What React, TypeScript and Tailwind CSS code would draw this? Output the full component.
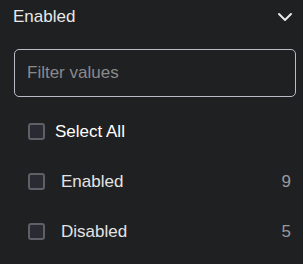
import React from "react";

function Box() {
  return (
    <span className="block w-[17px] h-[17px] rounded-[3px] border-2 border-[#5f5f68] bg-[#2a2a33] shrink-0" />
  );
}

export default function App() {
  const items = [
    { label: "Enabled", count: 9 },
    { label: "Disabled", count: 5 },
  ];
  return (
    <div
      className="w-[303px] h-[264px] bg-[#1f2022] text-white overflow-hidden"
      style={{ fontFamily: '"Liberation Sans", Arial, sans-serif' }}
    >
      <div className="flex items-center justify-between pl-[13px] pr-[10px] h-[33px]">
        <span className="text-[17px] leading-[20px] text-[#e8e8e8]">Enabled</span>
        <svg width="16" height="10" viewBox="0 0 16 10">
          <polyline points="2,2 8,8 14,2" fill="none" stroke="#e8e8e8" strokeWidth="2" strokeLinecap="round" strokeLinejoin="round" />
        </svg>
      </div>
      <div className="pl-[14px] pr-[7px] mt-[16px]">
        <div className="h-[48px] rounded-[5px] border border-[#b7bcc8] flex items-center pl-[12px]">
          <span className="text-[17px] text-[#8a8a8e]">Filter values</span>
        </div>
      </div>
      <div className="pl-[28px] pr-[12px] mt-[26px] flex flex-col gap-[33px]">
        <div className="flex items-center h-[17px]">
          <Box />
          <span className="ml-[10px] text-[17px] text-white">Select All</span>
        </div>
        {items.map((it) => (
          <div key={it.label} className="flex items-center h-[17px]">
            <Box />
            <span className="ml-[16px] text-[17px] text-[#e4e4e4] flex-1">{it.label}</span>
            <span className="text-[17px] text-[#9a9a9e]">{it.count}</span>
          </div>
        ))}
      </div>
    </div>
  );
}
